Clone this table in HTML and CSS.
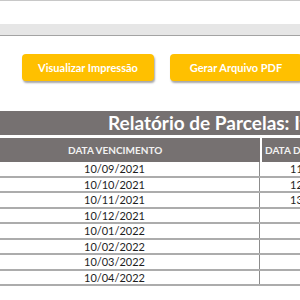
FILE: index.html
```html
<!DOCTYPE html>
<html lang="pt-BR">
<head>
<meta charset="utf-8">
<title>Relatório de Parcelas</title>
<link rel="stylesheet" href="styles.css">
</head>
<body>
<div class="page">
  <div class="topline"></div>
  <div class="whiteband"></div>
  <div class="grayband"></div>
  <div class="actions">
    <button class="btn">Visualizar Impressão</button>
    <button class="btn">Gerar Arquivo PDF</button>
  </div>
  <div class="title">Relatório de Parcelas: Item</div>
  <div class="table">
    <div class="row head">
      <div class="c1">DATA VENCIMENTO</div>
      <div class="c2">DATA DE PAGAMENTO</div>
    </div>
    <div class="row"><div class="c1">10/09/2021</div><div class="c2">11/09/2021</div></div>
    <div class="row"><div class="c1">10/10/2021</div><div class="c2">12/10/2021</div></div>
    <div class="row"><div class="c1">10/11/2021</div><div class="c2">13/11/2021</div></div>
    <div class="row"><div class="c1">10/12/2021</div><div class="c2"></div></div>
    <div class="row"><div class="c1">10/01/2022</div><div class="c2"></div></div>
    <div class="row"><div class="c1">10/02/2022</div><div class="c2"></div></div>
    <div class="row"><div class="c1">10/03/2022</div><div class="c2"></div></div>
    <div class="row"><div class="c1">10/04/2022</div><div class="c2"></div></div>
  </div>
</div>
</body>
</html>
```
FILE: styles.css
```css
html, body {
  margin: 0;
  padding: 0;
  overflow: hidden;
  background: #ffffff;
}
.page {
  width: 300px;
  height: 300px;
  overflow: hidden;
  font-family: Lato, "Open Sans", sans-serif;
}
.topline {
  height: 1px;
  background: #c8c8c8;
}
.whiteband {
  height: 23px;
}
.grayband {
  height: 11px;
  background: #e6e6e6;
  border-bottom: 1px solid #a3a3a3;
}
.actions {
  display: flex;
  gap: 16px;
  padding: 18px 0 0 22px;
  height: 27px;
}
.btn {
  flex: 0 0 132px;
  height: 27px;
  border: none;
  border-radius: 4px;
  background: #ffc000;
  color: #ffffff;
  font-family: inherit;
  font-weight: 700;
  font-size: 11px;
  box-shadow: 1px 2px 2px rgba(0, 0, 0, 0.35);
  padding: 0;
  white-space: nowrap;
}
.title {
  margin-top: 30px;
  height: 24px;
  line-height: 24px;
  background: #767171;
  color: #ffffff;
  font-weight: 700;
  font-size: 19px;
  padding-left: 108px;
  white-space: nowrap;
  overflow: hidden;
}
.table {
  margin-top: 3px;
}
.row {
  display: grid;
  grid-template-columns: 260px 1fr;
  height: 15.5px;
  box-sizing: border-box;
  border-bottom: 2px solid #acacac;
  font-size: 11px;
  color: #1e1e1e;
  line-height: 14px;
  white-space: nowrap;
  overflow: hidden;
}
.row .c1 {
  text-align: right;
  padding-right: 114px;
  border-right: 1px solid #8c8c8c;
}
.row .c2 {
  padding-left: 30px;
  overflow: hidden;
}
.row.head {
  height: 24px;
  border-bottom: none;
  line-height: 24px;
  column-gap: 2px;
  grid-template-columns: 260px 1fr;
  color: #f2f2f2;
  font-weight: 700;
  font-size: 10px;
}
.row.head .c1,
.row.head .c2 {
  background: #767171;
  border-right: none;
}
.row.head .c1 {
  text-align: left;
  padding: 0 0 0 68px;
}
.row.head .c2 {
  padding-left: 3px;
}
```
